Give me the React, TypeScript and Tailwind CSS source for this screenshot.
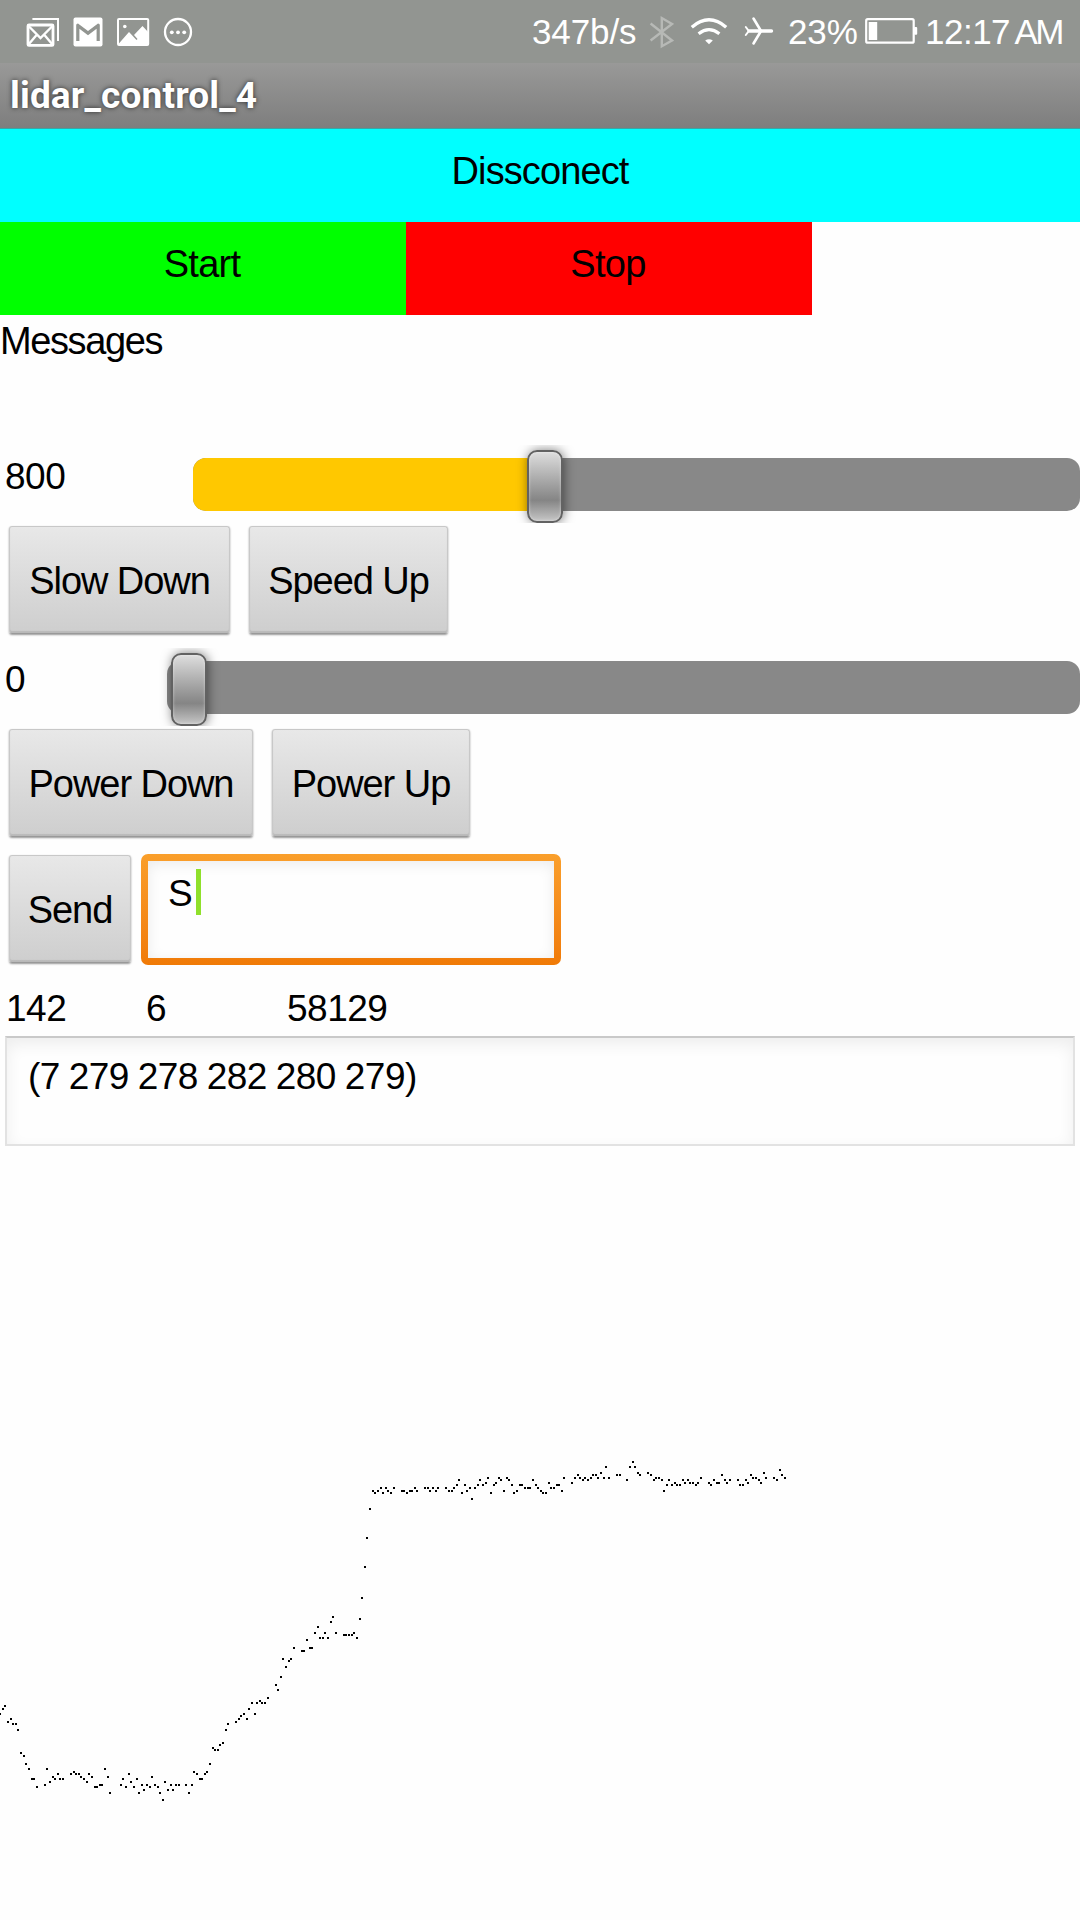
import React from "react";

type Run = { ox: number; oy: number; points: number[] };

// Lidar samples, grouped by scan segment. Points are x,y pairs in thirds of a pixel.
const RUNS: Run[] = [
  {
    ox: 0,
    oy: 1690,
    points: [
      0,71,8,56,16,48,24,95,32,87,40,103,47,103,55,119,63,190,71,198,79,221,87,237,95,268,102,268,110,292,134,284,142,237,150,276,158,260,166,268,173,253,181,268,189,268,
      213,253,221,245,229,253,236,253,244,260,252,268,260,276,268,253,276,260,284,292,292,292,299,284,307,284,315,237,323,260,331,308,362,284,370,268,378,292,386,253,394,276,
      402,292,410,268,418,308,425,284,433,300,441,284,449,292,457,260,465,284,473,292,480,308,488,331,496,276,504,300,512,284,520,300,528,284,536,284,559,284,567,308,575,284,
      583,245,591,253,599,268,606,268,614,253,622,245,630,221,
    ],
  },
  {
    ox: 180,
    oy: 1600,
    points: [
      98,444,106,451,114,451,121,436,129,428,137,389,145,373,169,365,177,357,184,349,192,342,200,357,208,326,216,310,224,342,232,310,240,302,247,310,255,310,263,294,
      287,255,295,270,303,231,310,176,318,200,326,184,334,176,342,145,366,153,373,153,381,121,389,145,397,145,405,98,413,82,421,113,428,113,436,98,444,113,452,66,460,50,
      468,98,491,105,499,105,507,105,515,105,523,98,531,113,539,58,547,-5,555,-100,562,-186,
    ],
  },
  {
    ox: 360,
    oy: 1440,
    points: [
      30,207,38,152,46,160,54,152,62,144,70,160,78,144,85,152,93,160,101,144,125,152,133,152,141,160,149,152,156,152,164,144,172,152,196,144,204,144,211,152,219,144,227,152,
      235,144,259,144,267,152,275,152,282,144,290,136,298,121,306,160,314,136,322,152,330,144,337,176,345,144,353,136,361,121,369,136,377,129,385,113,393,160,401,136,408,129,
      416,113,424,121,432,152,440,113,448,121,456,136,463,160,471,152,479,136,487,136,495,144,503,144,511,144,519,121,527,136,534,144,542,152,550,160,558,160,566,129,574,144,
      582,144,590,136,597,136,
    ],
  },
  {
    ox: 560,
    oy: 1440,
    points: [
      5,152,13,113,37,129,45,113,53,105,60,113,68,121,76,113,84,121,92,113,100,105,108,105,115,113,123,98,131,113,139,82,147,113,171,105,179,105,202,121,210,82,218,66,
      226,82,234,98,241,105,265,98,273,105,281,121,289,113,297,113,305,121,312,152,320,136,328,121,336,136,344,129,352,136,360,136,368,121,376,129,383,121,391,129,399,129,
      407,136,415,129,423,113,446,129,454,136,462,121,470,129,478,129,486,105,494,121,501,129,509,121,533,121,541,136,549,136,557,121,564,129,572,105,580,113,588,113,
      596,121,604,129,612,98,619,113,643,113,651,121,659,90,667,105,675,113,
    ],
  },
];

const CHART_TOP = 1146;

function dotPath() {
  let d = "";
  for (const { ox, oy, points } of RUNS) {
    for (let i = 0; i < points.length; i += 2) {
      const x = Math.round(ox + points[i] / 3 - 1);
      const y = Math.round(oy + points[i + 1] / 3 - 1 - CHART_TOP);
      d += `M${x} ${y}h2v2h-2z`;
    }
  }
  return d;
}

function StatusBar() {
  return (
    <div className="flex h-[63px] items-start bg-[#929591] text-[35px] leading-[40px] text-white">
      <svg className="ml-[26px] h-[63px] w-[34px] shrink-0" viewBox="26 0 34 63" fill="none" stroke="white" strokeWidth="2">
        <path d="M32.4 19H58v22" />
        <rect x="28" y="25" width="25" height="20.4" rx="1" strokeWidth="2.8" />
        <path d="M28.5 26l12 12 12-12M28.5 44.500l8.500-10M52.500 44.500l-8.500-10" strokeWidth="2.400" />
      </svg>
      <svg className="ml-[13px] h-[63px] w-[30px] shrink-0" viewBox="73 0 30 63">
        <rect x="73.500" y="17.500" width="29" height="29" rx="2" fill="white" />
        <path d="M76.200 41V25q0-1.500 1.800-1.500L88 31l10-7.500q1.800 0 1.800 1.500v16h-3.200V28.800L88 35.300l-8.600-6.500V41z" fill="#929591" />
      </svg>
      <svg className="ml-[14px] h-[63px] w-[33px] shrink-0" viewBox="117 0 33 63">
        <rect x="118" y="19" width="30.200" height="26" rx="1" fill="none" stroke="white" strokeWidth="2" />
        <circle cx="124.800" cy="26.500" r="1.800" fill="white" />
        <path d="M118 44.500l11-12.500 7.500 8 1-1-3.500-4 8.500-9 6 6.500V45h-30z" fill="white" />
      </svg>
      <svg className="ml-[13px] h-[63px] w-[30px] shrink-0" viewBox="163 0 30 63">
        <circle cx="178" cy="32" r="13" fill="none" stroke="white" strokeWidth="2.300" />
        <g fill="white">
          <circle cx="171.800" cy="32.300" r="1.900" />
          <circle cx="178" cy="32.300" r="1.900" />
          <circle cx="184.200" cy="32.300" r="1.900" />
        </g>
      </svg>
      <span className="ml-[339px] w-[116px] shrink-0 pt-[12px] tracking-[-0.1px]">347b/s</span>
      <svg className="h-[63px] w-[26px] shrink-0" viewBox="648 0 26 63" fill="none" stroke="#b7b9b6" strokeWidth="2.400">
        <path d="M650.600 23.500L672 40.500l-10.200 5.700V18L672 24l-21.400 16.500" />
      </svg>
      <svg className="ml-[16px] h-[63px] w-[38px] shrink-0" viewBox="690 0 38 63">
        <path d="M691.800 27.200Q709 12.500 726.200 27.200" fill="none" stroke="white" strokeWidth="3.400" />
        <path d="M698.600 33.800Q709 25.600 719.400 33.800" fill="none" stroke="white" strokeWidth="3.200" />
        <path d="M705.200 40.500Q709 38 712.800 40.500L709 44.300z" fill="white" />
      </svg>
      <svg className="ml-[16px] h-[63px] w-[30px] shrink-0" viewBox="744 0 30 63" fill="none" stroke="white" strokeLinecap="round">
        <path d="M749 31h22.500" strokeWidth="3.400" />
        <path d="M753.500 18.500l7.500 12.500-7.500 12.500" strokeWidth="2.600" strokeLinejoin="round" />
        <path d="M745.800 27l3 4-3 4" strokeWidth="2" strokeLinejoin="round" />
      </svg>
      <span className="ml-[14px] w-[76px] shrink-0 pt-[12px] tracking-[-0.1px]">23%</span>
      <svg className="h-[63px] w-[54px] shrink-0" viewBox="864 0 54 63">
        <rect x="866.200" y="19.200" width="47.500" height="23.500" rx="1.500" fill="none" stroke="white" strokeWidth="2.200" />
        <rect x="868.700" y="22" width="8.500" height="18" fill="white" />
        <rect x="914" y="27" width="3.200" height="7.800" rx="1" fill="white" />
      </svg>
      <span className="ml-[7px] shrink-0 whitespace-nowrap pt-[12px] tracking-[-0.5px]">
        12:17<span className="-ml-[1px] tracking-[-2.5px]"> AM</span>
      </span>
    </div>
  );
}

function PushButton({ children, size }: { children: string; size: string }) {
  return (
    <button
      className={`${size} h-[108px] shrink-0 rounded-[3px] border border-[#c8c8c8] border-b-[#999999] bg-linear-to-b from-[#e8e8e8] to-[#cecece] pt-[2px] text-center whitespace-nowrap shadow-[0_1px_2px_rgba(0,0,0,0.4),inset_0_-2px_1px_rgba(0,0,0,0.1)]`}
    >
      {children}
    </button>
  );
}

function Thumb({ place }: { place: string }) {
  return (
    <div
      className={`${place} absolute top-[-8px] h-[73px] w-[36px] rounded-[10px] border-2 border-[#626262] bg-linear-to-b from-[#dedede] via-[#858585] via-70% to-[#c6c6c6] shadow-[1px_0_11px_rgba(0,0,0,0.5),inset_0_0_3px_rgba(255,255,255,0.5)]`}
    />
  );
}

export default function App() {
  return (
    <div className="flex h-[1920px] w-[1080px] flex-col overflow-hidden bg-[#fefefe] font-['Liberation_Sans',Arial,sans-serif] text-[38px] leading-[40px] tracking-[-1.05px] text-black">
      <StatusBar />
      <header className="h-[66px] border-b border-[#3aa5a5] bg-linear-to-b from-[#999998] to-[#7e7e7e] pt-[13px] pl-[10px] font-['Roboto',sans-serif] text-[37px] font-bold tracking-[0.15px] text-white [text-shadow:0_0_5px_rgba(0,0,0,0.7)]">
        lidar_control_4
      </header>
      <div className="h-[93px] bg-[#00ffff] pt-[22px] text-center tracking-[-0.9px]">Dissconect</div>
      <div className="flex h-[93px] text-center tracking-[-0.7px]">
        <div className="w-[406px] bg-[#00ff00] pt-[22px] pr-[2px]">Start</div>
        <div className="w-[406px] bg-[#ff0000] pt-[22px] pr-[2px]">Stop</div>
      </div>
      <div className="h-[130px] pt-[6px] tracking-[-1.4px]">Messages</div>

      <div className="flex h-[78px] overflow-hidden">
        <span className="w-[193px] pt-[12px] pl-[5px] text-[37px] tracking-[-0.5px]">800</span>
        <div className="relative mt-[13px] h-[53px] flex-1 rounded-[13px] bg-[#888888]">
          <div className="h-full w-[350px] rounded-l-[13px] bg-[#ffc800]" />
          <Thumb place="left-[334px]" />
        </div>
      </div>
      <div className="flex h-[125px] gap-[19px] pt-[3px] pl-[9px]">
        <PushButton size="w-[221px]">Slow Down</PushButton>
        <PushButton size="w-[199px]">Speed Up</PushButton>
      </div>

      <div className="flex h-[78px] overflow-hidden">
        <span className="w-[167px] pt-[12px] pl-[5px] text-[37px] tracking-[-0.5px]">0</span>
        <div className="relative mt-[13px] h-[53px] flex-1 rounded-[13px] bg-[#888888]">
          <Thumb place="left-[4px]" />
        </div>
      </div>
      <div className="flex h-[125px] gap-[19px] pt-[3px] pl-[9px]">
        <PushButton size="w-[244px]">Power Down</PushButton>
        <PushButton size="w-[198px]">Power Up</PushButton>
      </div>

      <div className="flex h-[133px] pt-[4px] pl-[9px]">
        <PushButton size="w-[122px]">Send</PushButton>
        <div className="-mt-[1px] ml-[10px] h-[111px] w-[420px] rounded-[7px] bg-linear-to-b from-[#fa9f2b] to-[#f07a06] p-[7px]">
          <div className="flex h-full bg-[#fefefe] pt-[8px] pl-[20px] shadow-[inset_0_3px_14px_rgba(0,0,0,0.08)]">
            <span className="pt-[5px] tracking-[-0.5px] text-[37px]">S</span>
            <span className="ml-[4px] h-[46px] w-[5px] bg-[#8fe02b]" />
          </div>
        </div>
      </div>

      <div className="flex h-[52px] pt-[5px] pl-[6px] text-[37px] tracking-[-0.5px]">
        <span className="w-[140px]">142</span>
        <span className="w-[141px]">6</span>
        <span>58129</span>
      </div>
      <div className="mx-[5px] h-[110px] border-2 border-[#e2e2e2] border-t-[#c9c9c9] pt-[19px] pl-[21px] text-[37px] tracking-[-0.5px] [word-spacing:-1px] shadow-[inset_0_6px_16px_rgba(0,0,0,0.07)]">
        (7 279 278 282 280 279)
      </div>
      <svg className="h-[774px] w-[1080px]" viewBox="0 0 1080 774">
        <path d={dotPath()} fill="black" />
      </svg>
    </div>
  );
}
